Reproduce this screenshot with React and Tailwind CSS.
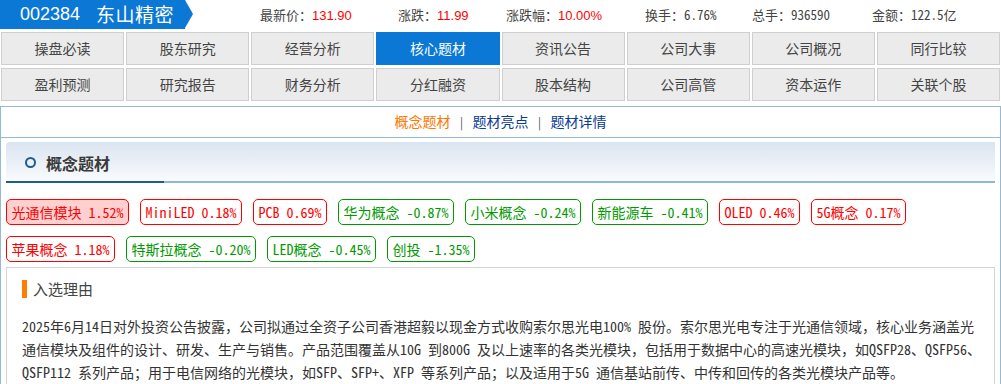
import React from 'react';

const CN = { fontFamily: '"Noto Sans Mono CJK SC", "Noto Sans CJK SC", "Liberation Mono", monospace' };
const SANS = { fontFamily: '"Liberation Sans", "Noto Sans CJK SC", sans-serif' };

const stats = [
  { label: '最新价', value: '131.90', red: true },
  { label: '涨跌', value: '11.99', red: true },
  { label: '涨跌幅', value: '10.00%', red: true },
  { label: '换手', value: '6.76%' },
  { label: '总手', value: '936590' },
  { label: '金额', value: '122.5亿' },
];

const navRows = [
  ['操盘必读', '股东研究', '经营分析', '核心题材', '资讯公告', '公司大事', '公司概况', '同行比较'],
  ['盈利预测', '研究报告', '财务分析', '分红融资', '股本结构', '公司高管', '资本运作', '关联个股'],
];

const tags = [
  [
    { name: '光通信模块', pct: '1.52%', up: true, hot: true },
    { name: 'MiniLED', pct: '0.18%', up: true },
    { name: 'PCB', pct: '0.69%', up: true },
    { name: '华为概念', pct: '-0.87%' },
    { name: '小米概念', pct: '-0.24%' },
    { name: '新能源车', pct: '-0.41%' },
    { name: 'OLED', pct: '0.46%', up: true },
    { name: '5G概念', pct: '0.17%', up: true },
  ],
  [
    { name: '苹果概念', pct: '1.18%', up: true },
    { name: '特斯拉概念', pct: '-0.20%' },
    { name: 'LED概念', pct: '-0.45%' },
    { name: '创投', pct: '-1.35%' },
  ],
];

function Tag({ t }) {
  const cls = t.up
    ? 'border-[#ff0000] text-[#ff0000]'
    : 'border-[#009a00] text-[#009a00]';
  return (
    <div
      className={`h-[26px] flex items-center px-[4.5px] border rounded-[5px] text-[14px] whitespace-pre ${cls} ${
        t.hot ? 'bg-[#ffd0d0]' : 'bg-white'
      }`}
    >
      {t.name} {t.pct}
    </div>
  );
}

export default function App() {
  return (
    <div className="w-[1001px] h-[384px] overflow-hidden bg-white text-[#333]" style={CN}>
      {/* top bar */}
      <div className="h-[31px] flex items-center">
        <div className="relative h-[29px] w-[185px] bg-[#0a78d4] text-white flex items-center self-start">
          <span className="ml-[20px] text-[18px]" style={SANS}>002384</span>
          <span className="ml-[16px] text-[19px] tracking-[0.5px]">东山精密</span>
          <div className="absolute right-[-8px] top-0 w-0 h-0 border-y-[14.5px] border-y-transparent border-l-[8px] border-l-[#0a78d4]" />
        </div>
        <div className="flex text-[13px] ml-[75px]">
          {stats.map((s, i) => (
            <div
              key={s.label}
              className={
                ['w-[138px]', 'w-[108px]', 'w-[139px]', 'w-[107px]', 'w-[120px]', 'w-[100px]'][i]
              }
            >
              <span className="text-[#444]">{s.label}：</span>
              <span className={s.red ? 'text-[#ff0000]' : 'text-[#444]'} style={s.red ? SANS : undefined}>
                {s.value}
              </span>
            </div>
          ))}
        </div>
      </div>

      {/* nav */}
      <div className="px-[1px] flex flex-col gap-[3px] mt-[1px]">
        {navRows.map((row, r) => (
          <div key={r} className="grid grid-cols-8 gap-[2px]">
            {row.map((n) => (
              <div
                key={n}
                className={`h-[33px] flex items-center justify-center text-[14px] border ${
                  n === '核心题材'
                    ? 'bg-[#0a78d4] border-[#0a78d4] text-white'
                    : 'bg-[#ebebeb] border-[#cfcfcf] text-[#444]'
                }`}
              >
                {n}
              </div>
            ))}
          </div>
        ))}
      </div>

      {/* panel */}
      <div className="mt-[5px] border border-[#96bad5] h-[300px]">
        <div className="h-[31px] border-b border-[#96bad5] flex items-center justify-center text-[14px] pb-[1px]">
          <span className="text-[#ff7700]">概念题材</span>
          <span className="mx-[8px] text-[#555] text-[12px]">|</span>
          <span className="text-[#0a3c96]">题材亮点</span>
          <span className="mx-[8px] text-[#555] text-[12px]">|</span>
          <span className="text-[#0a3c96]">题材详情</span>
        </div>

        <div className="px-[5px] pt-[4px]">
          <div className="h-[41px] bg-gradient-to-b from-[#dae4f0] to-[#fbfcfe] rounded-tl-[4px] flex items-center relative">
            <span className="ml-[19px] w-[11px] h-[11px] rounded-full border-[2px] border-[#1e5c8c]" />
            <span className="ml-[10px] text-[16px] font-bold text-[#3a3a3a]">概念题材</span>
            <div className="absolute left-0 right-0 bottom-0 h-[2px] bg-[#8cbad6]">
              <div className="w-[158px] h-[2px] bg-[#1d5d8c]" />
            </div>
          </div>

          <div className="mt-[16px] flex flex-col gap-[11px]">
            {tags.map((row, r) => (
              <div key={r} className="flex gap-[11px]">
                {row.map((t) => (
                  <Tag key={t.name} t={t} />
                ))}
              </div>
            ))}
          </div>

          <div className="mt-[5px] border border-[#d4d4d4] h-[130px] pl-[15px] pr-[10px]">
            <div className="mt-[10px] flex items-center">
              <span className="w-[5px] h-[18px] bg-[#ff7d00]" />
              <span className="ml-[6px] text-[15px] text-[#444]">入选理由</span>
            </div>
            <p className="mt-[14px] text-[14px] leading-[23px] text-[#333]">
              2025年6月14日对外投资公告披露，公司拟通过全资子公司香港超毅以现金方式收购索尔思光电100% 股份。索尔思光电专注于光通信领域，核心业务涵盖光通信模块及组件的设计、研发、生产与销售。产品范围覆盖从10G 到800G 及以上速率的各类光模块，包括用于数据中心的高速光模块，如QSFP28、QSFP56、QSFP112 系列产品；用于电信网络的光模块，如SFP、SFP+、XFP 等系列产品；以及适用于5G 通信基站前传、中传和回传的各类光模块产品等。
            </p>
          </div>
        </div>
      </div>
    </div>
  );
}
